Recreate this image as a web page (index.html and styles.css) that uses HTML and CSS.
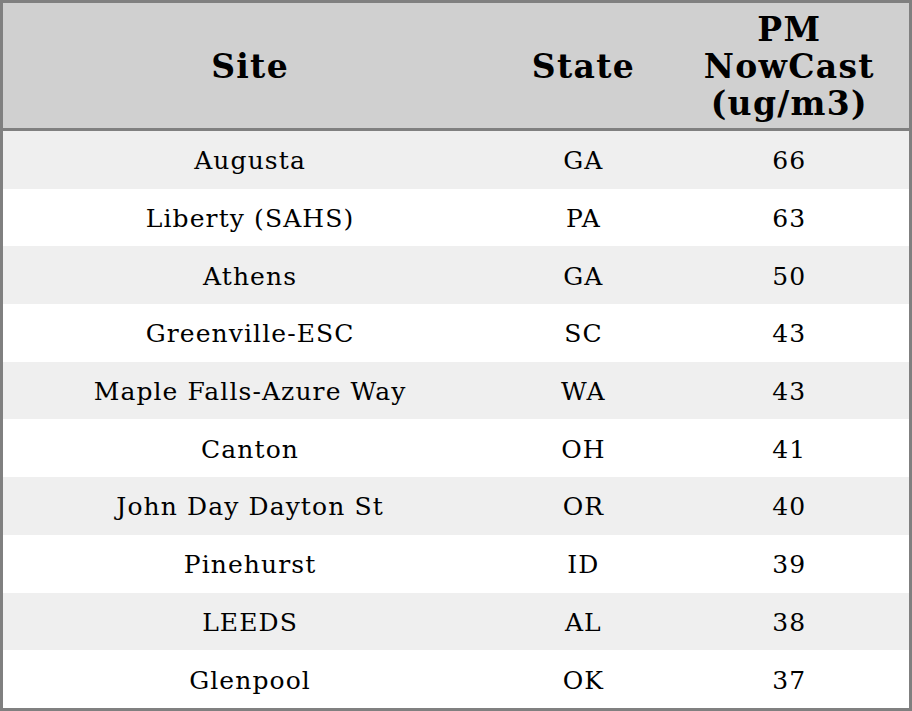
FILE: index.html
```html
<!DOCTYPE html>
<html>
<head>
<meta charset="utf-8">
<link rel="stylesheet" href="styles.css">
</head>
<body>
<table class="aq">
  <colgroup>
    <col class="c-site">
    <col class="c-state">
    <col class="c-pm">
  </colgroup>
  <thead>
    <tr><th>Site</th><th>State</th><th>PM<br>NowCast<br>(ug/m3)</th></tr>
  </thead>
  <tbody>
    <tr><td>Augusta</td><td>GA</td><td>66</td></tr>
    <tr><td>Liberty (SAHS)</td><td>PA</td><td>63</td></tr>
    <tr><td>Athens</td><td>GA</td><td>50</td></tr>
    <tr><td>Greenville-ESC</td><td>SC</td><td>43</td></tr>
    <tr><td>Maple Falls-Azure Way</td><td>WA</td><td>43</td></tr>
    <tr><td>Canton</td><td>OH</td><td>41</td></tr>
    <tr><td>John Day Dayton St</td><td>OR</td><td>40</td></tr>
    <tr><td>Pinehurst</td><td>ID</td><td>39</td></tr>
    <tr><td>LEEDS</td><td>AL</td><td>38</td></tr>
    <tr><td>Glenpool</td><td>OK</td><td>37</td></tr>
  </tbody>
</table>
</body>
</html>
```
FILE: styles.css
```css
html, body {
  margin: 0;
  padding: 0;
  background: #ffffff;
}
.aq {
  width: 912px;
  height: 711px;
  border-collapse: collapse;
  border: 3px solid #808080;
  font-family: "DejaVu Serif", serif;
  color: #000;
  table-layout: fixed;
}
.c-site { width: 494px; }
.c-state { width: 172px; }
.c-pm { width: 240px; }
.aq th {
  background: #d0d0d0;
  font-size: 33px;
  font-weight: bold;
  letter-spacing: 1.3px;
  line-height: 37px;
  height: 123px;
  padding: 2px 0 0;
  text-align: center;
  vertical-align: middle;
  border-bottom: 3px solid #808080;
}
.aq td {
  font-size: 25px;
  letter-spacing: 1.1px;
  text-align: center;
  vertical-align: middle;
  padding: 2px 0 0;
  height: 55px;
}
.aq tbody tr:nth-child(odd) td {
  background: #efefef;
}
```
